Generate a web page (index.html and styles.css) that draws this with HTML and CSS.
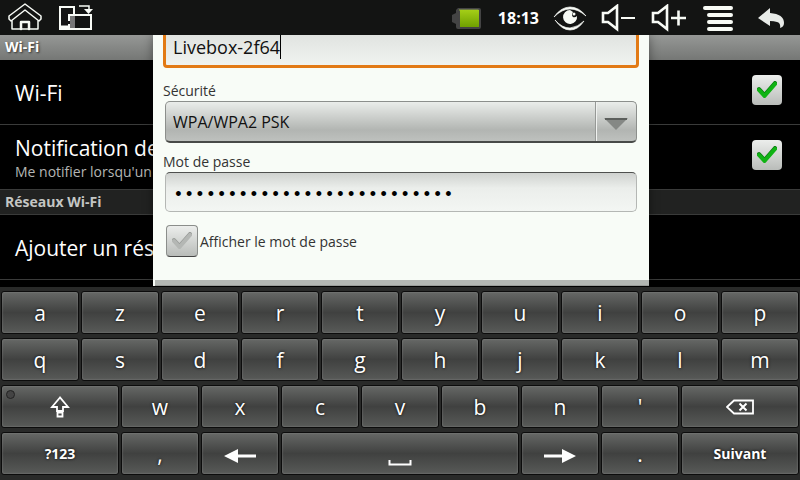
FILE: index.html
```html
<!DOCTYPE html>
<html lang="fr">
<head>
<meta charset="utf-8">
<title>Paramètres Wi-Fi</title>
<link rel="stylesheet" href="styles.css">
</head>
<body>
<header class="status">
  <div class="status-group status-start">
    <button class="icon" aria-label="Accueil">
      <svg width="36" height="30" viewBox="0 0 36 30" fill="none" stroke="#f8fbf6" stroke-width="1.5" stroke-linejoin="round" stroke-linecap="round"><path d="M18 1 2 13v3l2 2L18 7l14 11 2-2v-3z"/><path d="M5 18v8h26v-8"/><path d="M14 26v-7h8v7" stroke-width="2.5"/></svg>
    </button>
    <button class="icon" aria-label="Pivoter">
      <svg width="36" height="30" viewBox="0 0 36 30" fill="none" stroke="#f8fbf6" stroke-width="2"><path d="M12 26H3V4h14v8"/><path d="M3 24h9" stroke-width="3"/><path d="M13 12h5v13h-5z" fill="#777" stroke="none"/><path d="M12 12h22v14H12z"/><path d="M22 3h10v3" stroke-width="1.5"/><path d="M27 6h9l-4.500 5z" fill="#f8fbf6" stroke="none"/><path d="M12 18v3" stroke="#111"/></svg>
    </button>
  </div>
  <div class="status-group status-end">
    <svg class="battery" width="32" height="24" viewBox="0 0 32 24"><defs><linearGradient id="green" x2="0" y2="1"><stop stop-color="#a4ce17"/><stop offset="1" stop-color="#6fa000"/></linearGradient></defs><path d="M6 2h21q2 0 2 2v17q0 2-2 2H6q-2 0-2-2v-3l-4-2V9l4-2V4z" fill="#444"/><path d="M7 3h19l1 1-1 1H7z" fill="#6d7a42"/><path d="M8 4h19v17H8z" fill="url(#green)"/></svg>
    <time class="clock">18:13</time>
    <button class="icon" aria-label="Affichage">
      <svg width="34" height="26" viewBox="0 0 34 26"><path d="M1 12Q8 2 17 2t16 9Q25 4 17 4T1 12zM2 15q7 10 15 10t14-9q-6 6-14 7-8 0-15-8z" fill="#f8fbf6" stroke="#f8fbf6" stroke-width=".7"/><path d="M17 5a7 7 0 1 0 7 6q-2 2-4 1-2-2 0-5z" fill="#f8fbf6"/><circle cx="21" cy="9" r="1.5" fill="#f8fbf6"/></svg>
    </button>
    <button class="icon" aria-label="Baisser le volume">
      <svg width="36" height="28" viewBox="0 0 36 28" fill="none" stroke="#f8fbf6" stroke-width="2.6"><path d="M2 9h5l9-7v23l-9-7H2z"/><path d="M20 14h14" stroke-width="2"/></svg>
    </button>
    <button class="icon" aria-label="Augmenter le volume">
      <svg width="36" height="28" viewBox="0 0 36 28" fill="none" stroke="#f8fbf6" stroke-width="2.6"><path d="M2 9h5l9-7v23l-9-7H2z"/><path d="M20 14h15M27.500 6.500v15"/></svg>
    </button>
    <button class="icon icon-menu" aria-label="Menu">
      <svg width="30" height="26" viewBox="0 0 30 26" stroke="#f8fbf6" stroke-width="4" stroke-linecap="round"><path d="M2 3h26M6 10h22M6 17h22M6 24h22" /></svg>
    </button>
    <button class="icon icon-back" aria-label="Retour">
      <svg width="28" height="22" viewBox="0 0 28 22"><path d="M1 11 13 1v5q14 1 14 10 0 4-4 5 1-5-3-6-3-1-7-1v5z" fill="#e8ebe8"/></svg>
    </button>
  </div>
</header>

<main class="stage">
  <section class="settings">
    <h1 class="category category-title">Wi-Fi</h1>
    <label class="row">
      <span class="row-text"><span class="row-title">Wi-Fi</span></span>
      <span class="check"><input type="checkbox" checked><svg width="22" height="20" viewBox="0 0 22 20"><path d="M3 10l5.500 6L19 4" /></svg></span>
    </label>
    <label class="row">
      <span class="row-text"><span class="row-title">Notification de</span><span class="row-note">Me notifier lorsqu'un</span></span>
      <span class="check"><input type="checkbox" checked><svg width="22" height="20" viewBox="0 0 22 20"><path d="M3 10l5.500 6L19 4" /></svg></span>
    </label>
    <h2 class="category">Réseaux Wi-Fi</h2>
    <div class="row"><span class="row-text"><span class="row-title">Ajouter un rés</span></span></div>
  </section>

  <form class="dialog">
    <div class="fields">
      <div class="ssid"><input class="ssid-input" type="text" aria-label="SSID du réseau" value="Livebox-2f64"><span class="caret"></span></div>
      <label class="label" for="security">Sécurité</label>
      <div class="picker">
        <select id="security"><option>WPA/WPA2 PSK</option></select>
        <svg class="picker-arrow" width="24" height="12" viewBox="0 0 24 12"><path d="M0 0h24L12 12z" fill="#858885"/><path d="M1 1h22" stroke="#5c5f5c" stroke-width="2"/></svg>
      </div>
      <label class="label" for="password">Mot de passe</label>
      <input class="password" id="password" type="password" value="abcdefghijklmnopqrstuvwxyz">
      <label class="show"><span class="check check-off"><input type="checkbox"><svg width="22" height="20" viewBox="0 0 22 20"><path d="M3 10l5.500 6L19 4" /></svg></span>Afficher le mot de passe</label>
    </div>
    <div class="dialog-foot"></div>
  </form>
</main>

<section class="keyboard" aria-label="Clavier">
  <button class="key">a</button><button class="key">z</button><button class="key">e</button><button class="key">r</button><button class="key">t</button><button class="key">y</button><button class="key">u</button><button class="key">i</button><button class="key">o</button><button class="key">p</button>
  <button class="key">q</button><button class="key">s</button><button class="key">d</button><button class="key">f</button><button class="key">g</button><button class="key">h</button><button class="key">j</button><button class="key">k</button><button class="key">l</button><button class="key">m</button>
  <button class="key key-wide key-shift" aria-label="Majuscule"><svg width="20" height="22" viewBox="0 0 20 22" fill="none" stroke="#fff" stroke-width="1.8"><path d="M10 1.500 2 11h5v4h6v-4h5z"/><path d="M7.500 16.500h5v4h-5z"/></svg></button><button class="key">w</button><button class="key">x</button><button class="key">c</button><button class="key">v</button><button class="key">b</button><button class="key">n</button><button class="key">'</button><button class="key key-wide" aria-label="Effacer"><svg width="28" height="16" viewBox="0 0 28 16" fill="none" stroke="#fff" stroke-width="1.8"><path d="M1 8l7-6.500h19v13H8z"/><path d="M13.500 4.500l7 7M20.500 4.500l-7 7" stroke-width="2"/></svg></button>
  <button class="key key-wide key-word">?123</button><button class="key">,</button><button class="key key-low" aria-label="Gauche"><svg width="32" height="14" viewBox="0 0 32 14" fill="#fff"><path d="M0 7 14 0v5.500h18v3H14V14z"/></svg></button><button class="key key-space" aria-label="Espace"><svg width="24" height="6" viewBox="0 0 24 6" fill="none" stroke="#fff" stroke-width="2"><path d="M1.500 0v4.500h21V0"/></svg></button><button class="key key-low" aria-label="Droite"><svg width="32" height="14" viewBox="0 0 32 14" fill="#fff"><path d="M32 7 18 0v5.500H0v3h18V14z"/></svg></button><button class="key">.</button><button class="key key-wide key-word">Suivant</button>
</section>
</body>
</html>
```
FILE: styles.css
```css
* { box-sizing: border-box; }

body {
  margin: 0;
  height: 100vh;
  display: flex;
  flex-direction: column;
  overflow: hidden;
  background: #000;
  color: #fff;
  font-family: "Open Sans", "Noto Sans", sans-serif;
}

button { padding: 0; border: 0; background: none; color: inherit; font: inherit; }
svg { display: block; }

.status {
  height: 35px;
  flex: none;
  display: flex;
  justify-content: space-between;
  align-items: center;
  background: #131413;
}
.status-group { display: flex; align-items: center; }
.status-start { gap: 14px; padding-left: 7px; }
.status-end { gap: 14px; padding-right: 15px; }
.clock { font-size: 16px; font-weight: 700; }
.icon-menu { margin-left: 2px; }
.icon-back { margin-left: 10px; }

.stage { position: relative; flex: 1; min-height: 0; overflow: hidden; }

.category {
  margin: 0;
  height: 25px;
  padding-left: 5px;
  font-size: 14px;
  line-height: 24px;
  background: #212221;
  border-bottom: 1px solid #3a3b3a;
  color: #c4c6c4;
}
.category-title {
  color: #fff;
  background: linear-gradient(#969896, #757775);
  border-bottom: 0;
  text-shadow: 1px 1px 2px #333;
}
.row {
  height: 65px;
  display: flex;
  align-items: center;
  justify-content: space-between;
  padding: 0 18px 0 15px;
  border-bottom: 1px solid #3a3b3a;
  white-space: nowrap;
}
.row-text { display: flex; flex-direction: column; padding-top: 2px; }
.row-title { font-size: 21px; line-height: 28px; }
.row-note { font-size: 14px; line-height: 20px; color: #b4b6b4; }

.row .check { margin-bottom: 4px; }
.check {
  position: relative;
  width: 30px;
  height: 30px;
  flex: none;
  display: grid;
  place-items: center;
  border-radius: 4px;
  background: linear-gradient(#eceeec, #b9bcb9);
}
.check input { position: absolute; inset: 0; margin: 0; opacity: 0; }
.check path {
  fill: none;
  stroke: #10b314;
  stroke-width: 4;
  stroke-linecap: round;
  stroke-linejoin: round;
}
.check svg { filter: drop-shadow(0 -1px 0 #0a7a10); }
.check-off { width: 32px; height: 32px; border: 1px solid #8b8e8b; border-bottom-color: #444; }
.check-off path { stroke: #b4b7b4; }
.check-off svg { filter: drop-shadow(0 -1px 0 #969996); }

.dialog {
  position: absolute;
  inset: 0 151px 0 153px;
  display: flex;
  flex-direction: column;
  background: #f8fcf7;
  color: #333;
  box-shadow: 0 0 10px #0006;
}
.fields { flex: 1; padding: 0 10px; }
.ssid { position: relative; height: 33px; margin-bottom: 12px; }
.ssid-input {
  position: absolute;
  bottom: 0;
  width: 100%;
  height: 42px;
  padding: 0 7px;
  border: 3px solid #e27a15;
  border-radius: 4px;
  background: linear-gradient(#dde0dd, #f0f3f0);
  color: #111;
  font: 18px "Open Sans", "Noto Sans", sans-serif;
  outline: 0;
}
.caret { position: absolute; left: 117px; top: 0; width: 1px; height: 24px; background: #000; }
.label { display: block; height: 21px; font-size: 14px; line-height: 21px; }
.picker { position: relative; height: 42px; margin: 0 2px 8px; }
.picker select {
  appearance: none;
  width: 100%;
  height: 100%;
  padding: 0 50px 0 7px;
  border: 1px solid #8c8f8c;
  border-bottom: 2px solid #484a48;
  border-radius: 5px;
  background:
    linear-gradient(90deg, #969996 1px, #f0f2f0 1px) right 39px top / 2px 100% no-repeat,
    linear-gradient(#eaedea, #b2b5b2 72%, #bec1be);
  color: #111;
  font: 16px "Open Sans", "Noto Sans", sans-serif;
}
.picker-arrow { position: absolute; right: 9px; top: 17px; pointer-events: none; }
.password {
  display: block;
  width: calc(100% - 4px);
  height: 40px;
  margin: 0 2px 13px;
  padding: 6px 7px 0;
  border: 1px solid #b4b7b4;
  border-top-color: #4e504e;
  border-radius: 5px;
  background: linear-gradient(#cfd2cf, #ebeeeb 40%, #f3f6f3);
  color: #000;
  font: 18px "Liberation Mono", monospace;
}
.show { display: flex; align-items: center; gap: 2px; padding-left: 3px; font-size: 14px; }
.dialog-foot { height: 6px; margin-left: 2px; background: linear-gradient(#b3b7b3 5px, #999c99 5px); }

.keyboard {
  flex: none;
  display: grid;
  grid-template-columns: repeat(20, 1fr);
  padding: 2px 0 3px;
  border-top: 1px solid #000;
  background: #292a29;
}
.key {
  grid-column: span 2;
  height: 43px;
  margin: 2px 1px;
  display: grid;
  place-items: center;
  border: 1px solid #0c0c0c;
  border-radius: 3px;
  background: linear-gradient(#666866, #404140 50%, #585a58);
  box-shadow: inset 0 0 2px #888a88;
  color: #fff;
  font-size: 21px;
  line-height: 38px;
  text-shadow: 0 0 3px #000;
}
.key-wide { grid-column: span 3; }
.key-word { font-size: 14px; font-weight: 700; }
.key-low { padding-top: 4px; }
.key-space { grid-column: span 6; padding-top: 18px; }
.key-shift { position: relative; }
.key-shift::before {
  content: "";
  position: absolute;
  left: 4px;
  top: 4px;
  width: 7px;
  height: 7px;
  border: 1px solid #222;
  border-radius: 50%;
  background: #444;
}
```
